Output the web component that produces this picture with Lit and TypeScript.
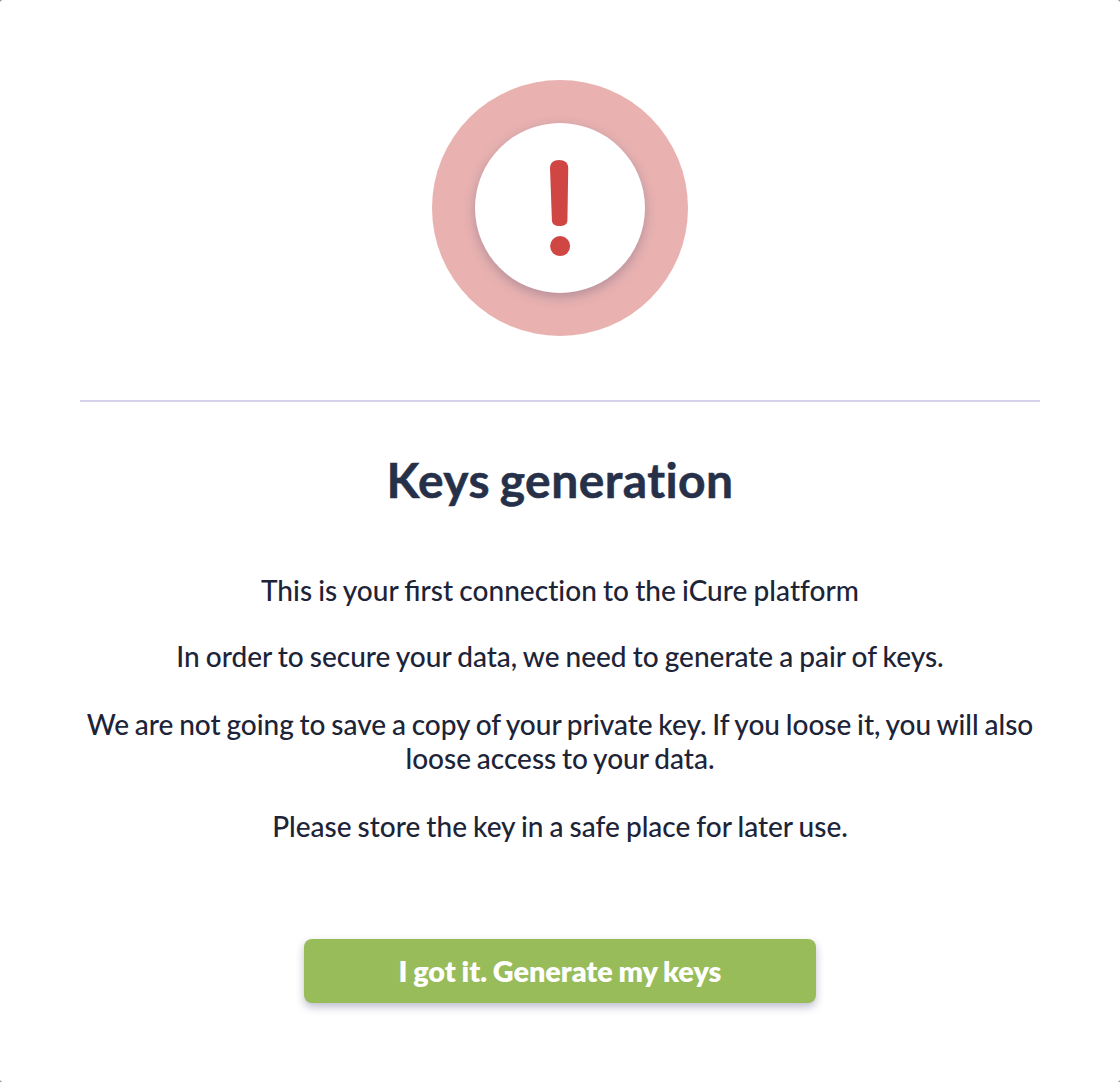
import { LitElement, html, css } from "lit";
import { customElement } from "lit/decorators.js";

@customElement("warning-icon")
class WarningIcon extends LitElement {
  static styles = css`
    :host { display: block; width: 256px; height: 256px; }
    .ring { box-sizing: border-box; width: 256px; height: 256px; border-radius: 50%; background: #e9b2b1; display: grid; place-items: center; }
    .disc { width: 170.67px; height: 170.67px; border-radius: 50%; background: #fff; box-shadow: 0 4px 12px rgba(40, 50, 90, 0.28); }
    svg { display: block; width: 100%; height: 100%; }
  `;
  render() {
    return html`<div class="ring"><div class="disc">
      <svg viewBox="474.87 122.87 170.67 170.67" fill="#cf4643">
        <path d="M549.9 168C549.9 162.6 553.4 159.8 559 159.8S568.1 162.6 568.1 168L567.3 220.5C567.1 224.3 564 226 559.5 226S552 224.3 551.8 220.5Z"/>
        <circle cx="560" cy="246" r="10"/>
      </svg></div></div>`;
  }
}

@customElement("app-root")
class AppRoot extends LitElement {
  static styles = css`
    :host { display: block; background: #84848a; }
    .card { box-sizing: border-box; width: 1120px; height: 1082px; padding: 80px 80px 0; background: #fff; border-radius: 3px; font-family: Lato, sans-serif; color: #1d2438; display: flex; flex-direction: column; align-items: center; font-variant-ligatures: none; }
    .head { width: 100%; box-sizing: border-box; height: 322px; border-bottom: 2px solid #d4d3eb; display: flex; justify-content: center; }
    h1 { margin: 49px 0 0; font-size: 48px; line-height: 58px; font-weight: 700; color: #263149; letter-spacing: 0.42px; word-spacing: -2.4px; -webkit-text-stroke: 0.5px #263149; }
    .text { display: flex; flex-direction: column; gap: 34px; margin-top: 64px; text-align: center; font-size: 28px; line-height: 34px; font-weight: 500; word-spacing: -1px; }
    .lig { font-variant-ligatures: common-ligatures; letter-spacing: 0; }
    p { margin: 0; }
    .intro { margin-bottom: -2px; letter-spacing: 0.04px; }
    .notice { word-spacing: -1.3px; }
    button { margin-top: 96px; width: 512px; height: 64px; padding: 0; border: 0; border-radius: 8px; background: #98bc59; color: #fff; font: 800 28.8px/34px Lato, sans-serif; font-variant-ligatures: none; word-spacing: -1px; box-shadow: 0 4px 8px rgba(40, 40, 90, 0.3); }
  `;
  render() {
    return html`<main class="card">
      <div class="head"><warning-icon></warning-icon></div>
      <h1>Keys generation</h1>
      <div class="text">
        <p class="intro">This is your <span class="lig">fi</span>rst connection to the iCure platform</p>
        <p>In order to secure your data, we need to generate a pair of keys.</p>
        <p class="notice">We are not going to save a copy of your private key. If you loose it, you will also loose access to your data.</p>
        <p>Please store the key in a safe place for later use.</p>
      </div>
      <button>I got it. Generate my keys</button>
    </main>`;
  }
}
